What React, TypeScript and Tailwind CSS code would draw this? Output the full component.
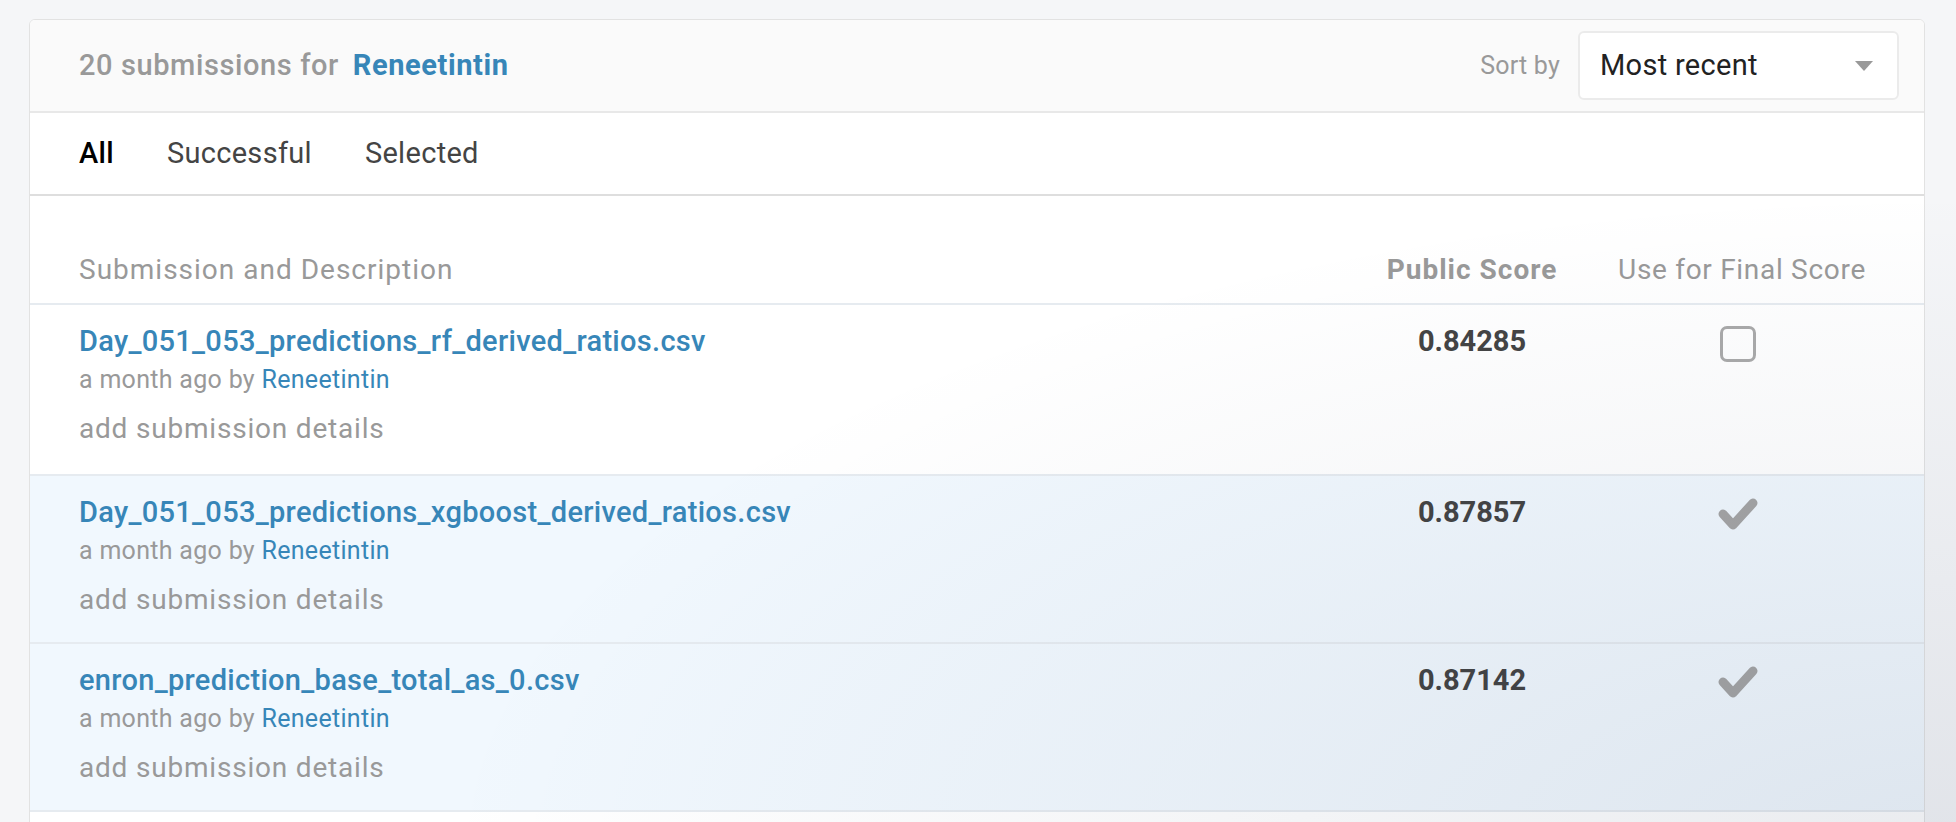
const rows = [
  { name: 'Day_051_053_predictions_rf_derived_ratios.csv', score: '0.84285', selected: false },
  { name: 'Day_051_053_predictions_xgboost_derived_ratios.csv', score: '0.87857', selected: true },
  { name: 'enron_prediction_base_total_as_0.csv', score: '0.87142', selected: true },
];

function CheckMark() {
  return (
    <svg width="42" height="34" viewBox="0 0 42 34">
      <polyline
        points="6,17 16,28 36,6"
        fill="none"
        stroke="#a5a5a5"
        strokeWidth="9"
        strokeLinecap="round"
        strokeLinejoin="round"
      />
    </svg>
  );
}

function SubmissionRow({ name, score, selected }: { name: string; score: string; selected: boolean }) {
  return (
    <div className={`flex border-t-2 border-[#e6ebf0] ${selected ? 'bg-[#f1f8fe]' : 'bg-white'}`}>
      <div className={`flex-1 pl-[49px] pt-[19px] ${selected ? 'pb-[25px]' : 'pb-[28px]'}`}>
        <div className="text-[29px] leading-[34px] tracking-[0.3px] font-medium text-[#3786b8]">{name}</div>
        <div className="mt-[7px] text-[25px] leading-[30px] tracking-[0.3px] text-[#999]">
          a month ago by <span className="text-[#3786b8]">Reneetintin</span>
        </div>
        <div className="mt-[17px] text-[28px] leading-[34px] tracking-[0.8px] text-[#999]">add submission details</div>
      </div>
      <div className="w-[240px] pt-[19px] text-center text-[29px] leading-[34px] font-bold text-[#444]">{score}</div>
      <div className="w-[300px] pt-[21px] flex justify-center pr-[8px]">
        {selected ? (
          <CheckMark />
        ) : (
          <div className="w-[36px] h-[36px] rounded-[7px] border-[3px] border-[#aaa]" />
        )}
      </div>
      <div className="w-[32px]" />
    </div>
  );
}

export default function App() {
  return (
    <div className="relative min-h-screen bg-[#f5f6f8] pt-[19px] pl-[29px] pr-[31px] font-['Roboto',sans-serif] overflow-hidden">
      <div className="border border-[#e2e2e2] rounded-t-[6px] bg-white overflow-hidden">
        {/* Header */}
        <div className="h-[93px] bg-[#fafafa] border-b-2 border-[#e8e8e8] flex items-center justify-between pl-[49px] pr-[25px]">
          <div className="text-[29px] tracking-[0.6px] font-medium text-[#999]">
            20 submissions for <span className="ml-[6px] font-bold text-[#3786b8]">Reneetintin</span>
          </div>
          <div className="flex items-center gap-[18px]">
            <span className="text-[25px] tracking-[0.2px] text-[#999]">Sort by</span>
            <div className="w-[321px] h-[69px] bg-white border-2 border-[#ebebeb] rounded-[6px] flex items-center justify-between pl-[20px] pr-[24px]">
              <span className="text-[29px] tracking-[0.3px] text-[#222]">Most recent</span>
              <svg width="18" height="10" viewBox="0 0 18 10">
                <path d="M0 0 L18 0 L9 10 Z" fill="#999" />
              </svg>
            </div>
          </div>
        </div>

        {/* Tabs */}
        <div className="h-[83px] border-b-2 border-[#dedede] flex items-center gap-[53px] pl-[49px] text-[29px] tracking-[0.3px]">
          <span className="font-medium text-black">All</span>
          <span className="text-[#444]">Successful</span>
          <span className="text-[#444]">Selected</span>
        </div>

        {/* Column headings */}
        <div className="flex pt-[57px] pb-[16px] text-[28px] leading-[34px] tracking-[1px] text-[#999]">
          <div className="flex-1 pl-[49px]">Submission and Description</div>
          <div className="w-[240px] text-center font-bold">Public Score</div>
          <div className="w-[300px] text-center tracking-[0.7px]">Use for Final Score</div>
          <div className="w-[32px]" />
        </div>

        {rows.map((r) => (
          <SubmissionRow key={r.name} {...r} />
        ))}
        <div className="border-t-2 border-[#e6ebf0] h-[40px]" />
      </div>
      <div className="pointer-events-none absolute inset-0 bg-[radial-gradient(ellipse_at_bottom_right,rgba(20,40,80,0.09),transparent_55%)]" />
    </div>
  );
}
